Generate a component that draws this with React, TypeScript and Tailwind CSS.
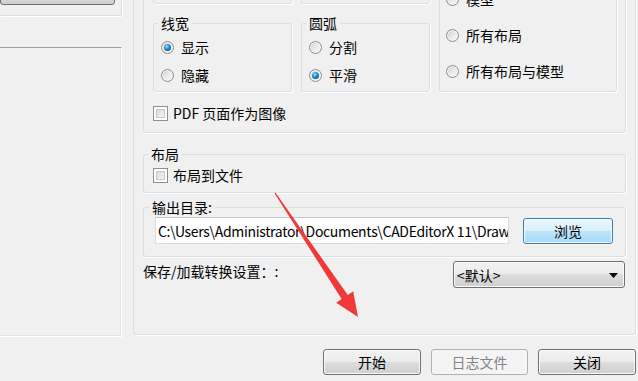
import React from "react";

const FONT = "font-['Noto_Sans_CJK_SC','Noto_Sans',sans-serif]";

function Radio({ checked, label }: { checked?: boolean; label: string }) {
  return (
    <div className="flex items-center gap-[7px] h-full">
      <div className="relative w-[13px] h-[13px] rounded-full border border-[#8a8c8e] bg-[linear-gradient(135deg,#cdcdcd_0%,#e9e9e9_50%,#fbfbfb_100%)] shadow-[inset_0_0_0_1px_#f4f4f4] flex items-center justify-center shrink-0">
        {checked && (
          <div className="w-[7px] h-[7px] rounded-full bg-[radial-gradient(circle_at_40%_35%,#9fe0ff_0%,#2a93d6_40%,#0b4a86_80%,#06325c_100%)]" />
        )}
      </div>
      <span className="leading-[16px] whitespace-nowrap">{label}</span>
    </div>
  );
}

function Checkbox({ label }: { label: string }) {
  return (
    <div className="flex items-center gap-[5px] h-[16px]">
      <div className="w-[15px] h-[15px] border border-[#8e8f8f] bg-white p-[2px] shrink-0">
        <div className="w-full h-full border border-[#c6c6c6] bg-[linear-gradient(135deg,#dadada,#f7f7f7)]" />
      </div>
      <span className="leading-[16px] whitespace-nowrap">{label}</span>
    </div>
  );
}

function WinButton({
  label,
  disabled,
  blue,
  className = "",
}: {
  label: string;
  disabled?: boolean;
  blue?: boolean;
  className?: string;
}) {
  const base = blue
    ? "border-[#3c7fb1] bg-[linear-gradient(#eaf6fd_0%,#d9f0fc_50%,#bee6fd_50%,#a7d9f5_100%)] shadow-[inset_0_0_0_1px_#f2faff] text-black"
    : disabled
    ? "border-[#adb2b5] bg-[#f4f4f4] text-[#838383]"
    : "border-[#707070] bg-[linear-gradient(#f2f2f2_0%,#ebebeb_50%,#dddddd_50%,#cfcfcf_100%)] shadow-[inset_0_0_0_1px_#fbfbfb] text-black";
  return (
    <div
      className={`flex items-center justify-center border rounded-[3px] leading-[16px] ${base} ${className}`}
    >
      {label}
    </div>
  );
}

export default function App() {
  return (
    <div
      className={`relative w-[638px] h-[381px] overflow-hidden bg-[#f0f0f0] text-[14px] text-black ${FONT}`}
    >
      {/* main row */}
      <div className="flex items-start -mt-[45px]">
        {/* left column */}
        <div className="w-[122px] flex flex-col">
          <div className="h-[61px] border-r border-b border-[#d5dfe5] rounded-br-[3px] shadow-[1px_1px_0_#fff] flex flex-col justify-end pb-[10px]">
            <div className="w-[115px] h-[21px] border border-[#707070] rounded-[3px] bg-[linear-gradient(#f2f2f2_0%,#ebebeb_50%,#dddddd_50%,#cfcfcf_100%)]" />
          </div>
          <div className="mt-[31px] h-[290px] border-t border-r border-b border-t-[#a0a0a0] border-r-white border-b-white shadow-[inset_-1px_-1px_0_#e3e3e3]" />
        </div>

        {/* main group box */}
        <div className="ml-[11px] w-[503px] border border-[#d5dfe5] rounded-[3px] shadow-[1px_1px_0_#fff] pt-[9px] px-[9px] pb-[46px]">
          {/* PDF group */}
          <div className="border border-[#d5dfe5] rounded-[3px] shadow-[1px_1px_0_#fff] pt-[9px] pl-[9px] pr-[8px] pb-[11px]">
            <div className="flex gap-[9px]">
              <div className="w-[277px] flex flex-col">
                <div className="flex gap-[9px]">
                  <div className="w-[139px] h-[29px] border border-[#d5dfe5] rounded-[3px] shadow-[1px_1px_0_#fff]" />
                  <div className="w-[129px] h-[29px] border border-[#d5dfe5] rounded-[3px] shadow-[1px_1px_0_#fff]" />
                </div>
                <div className="flex gap-[9px] mt-[11px]">
                  <fieldset className="w-[139px] border border-[#d5dfe5] rounded-[3px] shadow-[1px_1px_0_#fff] pl-[7px] pt-[2px] pb-[2px]">
                    <legend className="ml-[-3px] px-[3px] leading-[16px]">线宽</legend>
                    <div className="h-[28px]">
                      <Radio checked label="显示" />
                    </div>
                    <div className="h-[28px]">
                      <Radio label="隐藏" />
                    </div>
                  </fieldset>
                  <fieldset className="w-[129px] border border-[#d5dfe5] rounded-[3px] shadow-[1px_1px_0_#fff] pl-[7px] pt-[2px] pb-[2px]">
                    <legend className="ml-[-3px] px-[3px] leading-[16px]">圆弧</legend>
                    <div className="h-[28px]">
                      <Radio label="分割" />
                    </div>
                    <div className="h-[28px]">
                      <Radio checked label="平滑" />
                    </div>
                  </fieldset>
                </div>
              </div>
              <div className="w-[178px] border border-[#d5dfe5] rounded-[3px] shadow-[1px_1px_0_#fff] pl-[6px] pt-[5px] pb-[2px]">
                <div className="h-[36px]">
                  <Radio label="模型" />
                </div>
                <div className="h-[36px]">
                  <Radio label="所有布局" />
                </div>
                <div className="h-[36px]">
                  <Radio label="所有布局与模型" />
                </div>
              </div>
            </div>
            <div className="mt-[13px]">
              <Checkbox label="PDF 页面作为图像" />
            </div>
          </div>

          {/* 布局 */}
          <fieldset className="mt-[13px] border border-[#d5dfe5] rounded-[3px] shadow-[1px_1px_0_#fff] pl-[9px] pt-[5px] pb-[9px]">
            <legend className="ml-[-5px] px-[3px] leading-[16px]">布局</legend>
            <Checkbox label="布局到文件" />
          </fieldset>

          {/* 输出目录 */}
          <fieldset className="mt-[6px] border border-[#d5dfe5] rounded-[3px] shadow-[1px_1px_0_#fff] pl-[11px] pt-[2px] pb-[12px]">
            <legend className="ml-[-6px] px-[3px] leading-[16px]">输出目录:</legend>
            <div className="flex items-start">
              <div className="w-[354px] h-[27px] border border-[#d8dce2] border-t-[#c5cad1] bg-white overflow-hidden whitespace-nowrap pl-[2px] flex items-center leading-[16px] tracking-[-0.32px]">
                C:\Users\Administrator\Documents\CADEditorX 11\Drawings
              </div>
              <WinButton blue label="浏览" className="ml-[14px] mt-[1px] w-[90px] h-[26px]" />
            </div>
          </fieldset>

          {/* 保存/加载 */}
          <div className="mt-[4px] flex items-start justify-between pr-[1px]">
            <span className="mt-[2px] leading-[16px] whitespace-nowrap">保存/加载转换设置：:</span>
            <div className="relative w-[172px] h-[27px] border border-[#707070] rounded-[3px] bg-[linear-gradient(#f2f2f2_0%,#ebebeb_50%,#dddddd_50%,#cfcfcf_100%)] shadow-[inset_0_0_0_1px_#fbfbfb] flex items-center pl-[3px] leading-[16px]">
              &lt;默认&gt;
              <svg
                className="absolute right-[6px] top-[11px]"
                width="9"
                height="5"
                viewBox="0 0 9 5"
              >
                <polygon points="0,0 9,0 4.5,5" fill="#000" />
              </svg>
            </div>
          </div>
        </div>
      </div>

      {/* bottom buttons */}
      <div className="mt-[12px] flex justify-end gap-[10px] pr-[2px]">
        <WinButton label="开始" className="w-[98px] h-[26px]" />
        <WinButton disabled label="日志文件" className="w-[97px] h-[26px]" />
        <WinButton label="关闭" className="w-[98px] h-[26px]" />
      </div>

      {/* red arrow overlay */}
      <svg
        className="absolute left-0 top-0 pointer-events-none"
        width="638"
        height="381"
        viewBox="0 0 638 381"
      >
        <polygon
          points="275.4,192.6 347.8,295 353.2,291.2 358,317 336.2,302.8 341.6,299 274.6,193.4"
          fill="#f03a3a"
        />
      </svg>
    </div>
  );
}
